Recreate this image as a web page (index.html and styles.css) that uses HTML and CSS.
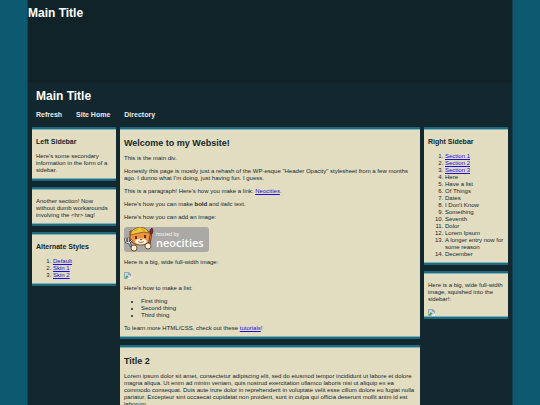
FILE: index.html
```html
<!DOCTYPE html>
<html lang="en">
<head>
<meta charset="utf-8">
<title>Main Title</title>
<link rel="stylesheet" href="styles.css">
</head>
<body>
<div class="wrapper">
  <header class="banner"><h1>Main Title</h1></header>
  <div class="masthead">
    <h1>Main Title</h1>
    <nav class="menu">
      <a href="#">Refresh</a>
      <a href="#">Site Home</a>
      <a href="#">Directory</a>
    </nav>
  </div>
  <div class="columns">
    <aside class="column">
      <section class="box">
        <h3>Left Sidebar</h3>
        <p>Here's some secondary information in the form of a sidebar.</p>
      </section>
      <section class="box">
        <p>Another section! Now without dumb workarounds involving the &lt;hr&gt; tag!</p>
      </section>
      <section class="box">
        <h3>Alternate Styles</h3>
        <ol>
          <li><a href="#">Default</a></li>
          <li><a href="#">Skin 1</a></li>
          <li><a href="#">Skin 2</a></li>
        </ol>
      </section>
    </aside>
    <main class="column">
      <article class="box">
        <h2>Welcome to my Website!</h2>
        <p>This is the main div.</p>
        <p>Honestly this page is mostly just a rehash of the WP-esque "Header Opacity" stylesheet from a few months ago. I dunno what I'm doing, just having fun. I guess.</p>
        <p>This is a paragraph! Here's how you make a link: <a href="#">Neocities</a>.</p>
        <p>Here's how you can make <strong>bold</strong> and <em>italic</em> text.</p>
        <p>Here's how you can add an image:</p>
        <svg class="badge" viewBox="0 0 85 26" role="img" aria-label="hosted by neocities">
          <rect x="0" y="0" width="85" height="25" rx="3" fill="#aaa9a5"/>
          <path d="M6 12 L6 4 L11 4 Q17 0 22 4 L27 5 L26 12 Q25 18 17 18 Q8 18 6 12Z" fill="#ee9340" stroke="#5a3216" stroke-width=".8"/>
          <path d="M6 8 Q8 1 16 0 Q23 1 25 6 Q20 4 15 6 Q10 7 6 8Z" fill="#f3c53c" stroke="#6d4c18" stroke-width=".7"/>
          <path d="M10 4 L14 2 M17 2 L21 4" stroke="#b98a25" stroke-width=".7"/>
          <ellipse cx="17" cy="14.500" rx="6" ry="3" fill="#fff0d6"/>
          <path d="M12 9 V12 M21 8 V11" stroke="#2b1d15" stroke-width="1.5"/>
          <path d="M15.500 12 L18.500 12 L17 13.500Z" fill="#8b3425"/>
          <path d="M14 14.500 Q17 17 20 14.500" fill="none" stroke="#65301f" stroke-width=".6"/>
          <path d="M1 11 L2 15 L5 16 M4 10 L5 16 M8 13 L5 16 L8 20" fill="none" stroke="#333" stroke-width="2.2"/>
          <path d="M1 11 L2 15 L5 16 M4 10 L5 16 M8 13 L5 16 L8 20" fill="none" stroke="#ddd" stroke-width="1"/>
          <path d="M27 7 L25 19" stroke="#39262a" stroke-width="2.2"/>
          <path d="M27 7 L25 19" stroke="#d86c4c" stroke-width="1"/>
          <path d="M26 7 L26 3 L28 1 L29 4 L28 7Z" fill="#8c2438" stroke="#48212b" stroke-width=".8"/>
          <circle cx="10" cy="21" r="3" fill="#fff1d0" stroke="#5a3216" stroke-width=".8"/>
          <circle cx="24" cy="19" r="3" fill="#fff1d0" stroke="#5a3216" stroke-width=".8"/>
          <text class="badge-small" x="32" y="9">hosted by</text>
          <text class="badge-large" x="32" y="20">neocities</text>
        </svg>
        <p>Here is a big, wide full-width image:</p>
        <svg class="missing" viewBox="0 0 7 7" role="img" aria-label="Missing image">
          <path d="M0 0H5L7 2V7H0Z" fill="#9aa8a8"/>
          <path d="M1 1H4V3H6V5L3 6H1Z" fill="#bcd6f4"/>
          <path d="M1 6L3 3L4 5L2 6Z" fill="#2f9a2c"/>
          <path d="M3 7L7 4V7Z" fill="#f4f3e9"/>
        </svg>
        <p>Here's how to make a list:</p>
        <ul>
          <li>First thing</li>
          <li>Second thing</li>
          <li>Third thing</li>
        </ul>
        <p>To learn more HTML/CSS, check out these <a href="#">tutorials</a>!</p>
      </article>
      <article class="box">
        <h2>Title 2</h2>
        <p>Lorem ipsum dolor sit amet, consectetur adipiscing elit, sed do eiusmod tempor incididunt ut labore et dolore magna aliqua. Ut enim ad minim veniam, quis nostrud exercitation ullamco laboris nisi ut aliquip ex ea commodo consequat. Duis aute irure dolor in reprehenderit in voluptate velit esse cillum dolore eu fugiat nulla pariatur. Excepteur sint occaecat cupidatat non proident, sunt in culpa qui officia deserunt mollit anim id est laborum.</p>
      </article>
    </main>
    <aside class="column">
      <section class="box">
        <h3>Right Sidebar</h3>
        <ol>
          <li><a href="#">Section 1</a></li>
          <li><a href="#">Section 2</a></li>
          <li><a href="#">Section 3</a></li>
          <li>Here</li>
          <li>Have a list</li>
          <li>Of Things</li>
          <li>Dates</li>
          <li>I Don't Know</li>
          <li>Something</li>
          <li>Seventh</li>
          <li>Dolor</li>
          <li>Lorem Ipsum</li>
          <li>A longer entry now for some reason</li>
          <li>December</li>
        </ol>
      </section>
      <section class="box box-image">
        <p>Here is a big, wide full-width image, squished into the sidebar!:</p>
        <svg class="missing" viewBox="0 0 7 7" role="img" aria-label="Missing image">
          <path d="M0 0H5L7 2V7H0Z" fill="#9aa8a8"/>
          <path d="M1 1H4V3H6V5L3 6H1Z" fill="#bcd6f4"/>
          <path d="M1 6L3 3L4 5L2 6Z" fill="#2f9a2c"/>
          <path d="M3 7L7 4V7Z" fill="#f4f3e9"/>
        </svg>
      </section>
    </aside>
  </div>
</div>
</body>
</html>
```
FILE: styles.css
```css
* {
  box-sizing: border-box;
}

body {
  margin: 0;
  background: #0d5970;
  color: #13282e;
  font: 6px/7px "Liberation Sans", Arial, sans-serif;
}

.wrapper {
  width: 90%;
  min-height: 100vh;
  margin: 0 auto;
  background: #13272e;
  border: solid #13414f;
  border-width: 0 1px;
}

h1, h2, h3, p, ul, ol {
  margin: 0;
}

h1 {
  color: #fff;
  font-size: 12px;
  line-height: 13px;
}

h2 {
  font-size: 9px;
  line-height: 10px;
  margin-bottom: 7px;
}

h3 {
  font-size: 7px;
  line-height: 8px;
  margin-bottom: 7px;
}

.banner {
  height: 83px;
  padding-top: 7px;
  background: #102329;
}

.masthead {
  padding: 7px 8px 8px;
}

.menu {
  display: flex;
  gap: 14px;
  margin-top: 8px;
}

.menu a {
  color: #e8eeee;
  font-size: 7px;
  line-height: 8px;
  font-weight: bold;
  text-decoration: none;
}

.columns {
  display: grid;
  grid-template-columns: 84fr 300fr 84fr;
  gap: 4px;
  padding: 0 4px 8px;
}

.column {
  min-width: 0;
}

.box {
  margin-bottom: 6px;
  padding: 9px 4px 5px;
  background: #e2dcc0;
  border: solid #22697d;
  border-width: 2px 0;
  box-shadow: inset 0 1px #79b6bc, inset 0 -1px #79b6bc;
}

.box-image {
  padding-bottom: 1px;
}

.box > p,
.box > ul,
.box > ol {
  margin-bottom: 6px;
}

.box > :last-child {
  margin-bottom: 0;
}

ul, ol {
  padding-left: 17px;
}

a {
  color: #1b0de0;
}

.badge {
  display: block;
  width: 85px;
  height: 26px;
  margin-bottom: 6px;
}

.badge-small {
  fill: #fff;
  font: 5px "Open Sans", sans-serif;
}

.badge-large {
  fill: #fff;
  font: 600 11px "Open Sans", sans-serif;
}

.missing {
  display: block;
  width: 7px;
  height: 7px;
  margin-bottom: 6px;
}
```
